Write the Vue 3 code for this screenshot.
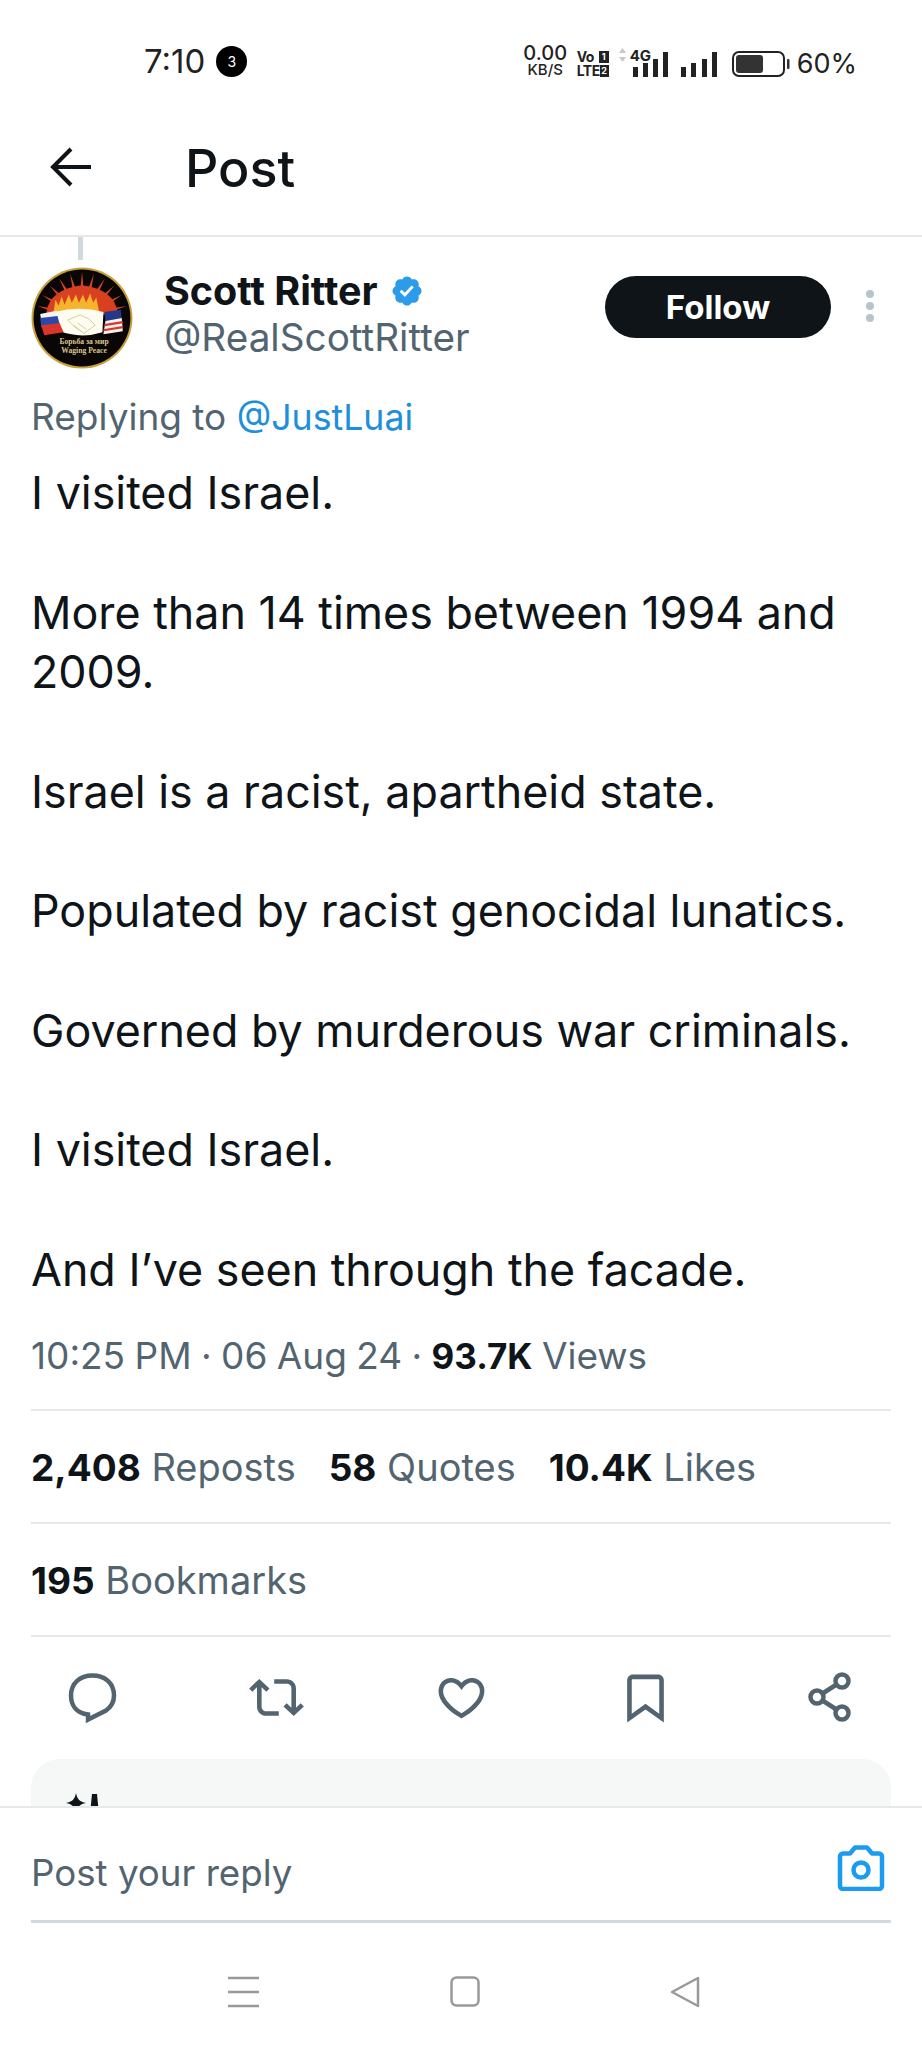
<script setup>
const lines = [
  'I visited Israel.',
  'More than 14 times between 1994 and 2009.',
  'Israel is a racist, apartheid state.',
  'Populated by racist genocidal lunatics.',
  'Governed by murderous war criminals.',
  'I visited Israel.',
  'And I’ve seen through the facade.'
]
const signalA = [[0, 10], [10, 14], [20, 18], [30, 25]]
const signalB = [[0, 10], [10, 14], [21, 18], [31, 25]]
const rays = Array.from({ length: 11 }, (_, i) => -75 + i * 15)
</script>

<template>
  <div class="screen">
    <div class="status">
      <div class="status-left">
        <span class="clock">7:10</span>
        <span class="count">3</span>
      </div>
      <div class="status-right">
        <div class="speed"><span class="speed-num">0.00</span><span class="speed-unit">KB/S</span></div>
        <div class="volte">
          <span class="volte-line">Vo<i class="sim">1</i></span>
          <span class="volte-line">LTE<i class="sim">2</i></span>
        </div>
        <div class="net">
          <svg class="updown" width="9" height="14" viewBox="0 0 9 14"><path d="M4.5 0 8 5H1zM4.5 14 8 9H1z" fill="#c8c8c8"/></svg>
          <span class="four-g">4G</span>
          <svg class="bars" width="35" height="26" viewBox="0 0 35 26">
            <rect v-for="b in signalA" :key="b[0]" :x="b[0]" :y="26 - b[1]" width="5" :height="b[1]" fill="#222" />
          </svg>
        </div>
        <svg class="bars" width="36" height="26" viewBox="0 0 36 26">
          <rect v-for="b in signalB" :key="b[0]" :x="b[0]" :y="26 - b[1]" width="5" :height="b[1]" fill="#222" />
        </svg>
        <svg class="battery" width="58" height="26" viewBox="0 0 58 26">
          <rect x="1" y="1" width="51" height="24" rx="6" fill="none" stroke="#222" stroke-width="2" />
          <rect x="4" y="4" width="27" height="18" rx="3" fill="#333" />
          <rect x="55" y="8" width="2.5" height="10" rx="1" fill="#333" />
        </svg>
        <span class="percent">60%</span>
      </div>
    </div>

    <header class="appbar">
      <svg class="back" width="42" height="40" viewBox="0 0 42 40">
        <path d="M41 20H3M21 2 3 20l18 18" fill="none" stroke="#0f1419" stroke-width="4" />
      </svg>
      <h1 class="title">Post</h1>
    </header>

    <main class="content">
      <div class="thread"></div>
      <div class="author">
        <svg class="avatar" viewBox="0 0 100 100">
          <circle cx="50" cy="50" r="49.5" fill="#c9a13a" />
          <circle cx="50" cy="50" r="47.5" fill="#0a0606" />
          <g fill="#d2452a">
            <polygon v-for="r in rays" :key="r" points="47,36 50,5 53,36" :transform="`rotate(${r} 50 50)`" />
          </g>
          <path d="M15 45Q18 22 50 18 82 22 85 45z" fill="#d8401f" />
          <path d="M22 45l2-13 3 6 3-9 3 8 4-10 3 8 4-8 3 8 4-8 3 8 4-9 3 9 3-5 3 15z" fill="#f6b42e" />
          <path d="M23 44Q48 38 71 44L70 64Q48 71 26 62z" fill="#fffdf2" />
          <path d="M9 46l16-3 2 6-17 3z" fill="#f4f4f4" />
          <path d="M9 50l17-2 2 8-18 3z" fill="#2b4aa8" />
          <path d="M10 57l18-2 4 9-19 3z" fill="#d8352b" />
          <path d="M72 44l16-2 1 8-16 3z" fill="#23388a" />
          <path d="M73 53l16-3 1 13-19 3z" fill="#f4f0ec" />
          <path d="M72 57l18-3M71 62l19-3" stroke="#d8352b" stroke-width="2.2" fill="none" />
          <path d="M36 52l12-5 9 4 6 6-11 8-9-6zM46 55l8 6M42 57l7 6" fill="none" stroke="#d9c88b" stroke-width="0.9" />
          <text x="52" y="75" text-anchor="middle" class="avatar-text">Борьба за мир</text>
          <text x="52" y="84" text-anchor="middle" class="avatar-text">Waging Peace</text>
        </svg>
        <div class="names">
          <div class="name-row">
            <span class="name">Scott Ritter</span>
            <svg class="verified" width="34" height="34" viewBox="0 0 22 22">
              <path fill="#2b9bea" d="M20.396 11c-.018-.646-.215-1.275-.57-1.816-.354-.54-.852-.972-1.438-1.246.223-.607.27-1.264.14-1.897-.131-.634-.437-1.218-.882-1.687-.47-.445-1.053-.75-1.687-.882-.633-.13-1.29-.083-1.897.14-.273-.587-.704-1.086-1.245-1.44S11.647 1.62 11 1.604c-.646.017-1.273.213-1.813.568s-.969.854-1.24 1.44c-.608-.223-1.267-.272-1.902-.14-.635.13-1.22.436-1.69.882-.445.47-.749 1.055-.878 1.688-.13.633-.08 1.29.144 1.896-.587.274-1.087.705-1.443 1.245-.356.54-.555 1.17-.574 1.817.02.647.218 1.276.574 1.817.356.54.856.972 1.443 1.245-.224.606-.274 1.263-.144 1.896.13.634.433 1.218.877 1.688.47.443 1.054.747 1.687.878.633.132 1.29.084 1.897-.136.274.586.705 1.084 1.246 1.439.54.354 1.17.551 1.816.569.647-.016 1.276-.213 1.817-.567s.972-.854 1.245-1.44c.604.239 1.266.296 1.903.164.636-.132 1.22-.447 1.68-.907.46-.46.776-1.044.908-1.681s.075-1.299-.165-1.903c.586-.274 1.084-.705 1.439-1.246.354-.54.551-1.17.569-1.816z"/>
              <path fill="#fff" d="M9.662 14.85l-3.429-3.428 1.293-1.302 2.072 2.072 4.4-4.794 1.347 1.246z"/>
            </svg>
          </div>
          <div class="handle">@RealScottRitter</div>
        </div>
        <button class="follow">Follow</button>
        <div class="more"><i></i><i></i><i></i></div>
      </div>

      <p class="replying">Replying to <a class="link">@JustLuai</a></p>

      <div class="body">
        <p v-for="(line, i) in lines" :key="i">{{ line }}</p>
      </div>

      <p class="meta">10:25 PM · 06 Aug 24 · <b>93.7K</b> Views</p>

      <div class="stat-row">
        <span><b>2,408</b> Reposts</span>
        <span><b>58</b> Quotes</span>
        <span><b>10.4K</b> Likes</span>
      </div>
      <div class="stat-row">
        <span><b>195</b> Bookmarks</span>
      </div>

      <div class="actions">
        <svg viewBox="0 0 55 55" class="stroked"><path d="M23 44.5C11 43 6 35 6 25.5 6 13 15 5.5 27.5 5.5 40 5.5 49 13 49 25.5c0 6.5-3 11.5-8 15L23 49.5z"/></svg>
        <svg viewBox="0 0 24 24"><path d="M4.5 3.88l4.432 4.14-1.364 1.46L5.5 7.55V16c0 1.1.896 2 2 2H13v2H7.5c-2.209 0-4-1.79-4-4V7.55L1.432 9.48.068 8.02 4.5 3.88zM16.5 6H11V4h5.5c2.209 0 4 1.79 4 4v8.45l2.068-1.93 1.364 1.46-4.432 4.14-4.432-4.14 1.364-1.46 2.068 1.93V8c0-1.1-.896-2-2-2z"/></svg>
        <svg viewBox="0 0 24 24"><path d="M16.697 5.5c-1.222-.06-2.679.51-3.89 2.16l-.805 1.09-.806-1.09C9.984 6.01 8.526 5.44 7.304 5.5c-1.243.07-2.349.78-2.91 1.91-.552 1.12-.633 2.78.479 4.82 1.074 1.97 3.257 4.27 7.129 6.61 3.87-2.34 6.052-4.64 7.126-6.61 1.111-2.04 1.03-3.7.477-4.82-.561-1.13-1.666-1.84-2.908-1.91zm4.187 7.69c-1.351 2.48-4.001 5.12-8.379 7.67l-.503.3-.504-.3c-4.379-2.55-7.029-5.19-8.382-7.67-1.36-2.5-1.41-4.86-.514-6.67.887-1.79 2.647-2.91 4.601-3.01 1.651-.09 3.368.56 4.798 2.01 1.429-1.45 3.146-2.1 4.796-2.01 1.954.1 3.714 1.22 4.601 3.01.896 1.81.846 4.17-.514 6.67z"/></svg>
        <svg viewBox="0 0 24 24"><path d="M4 4.5C4 3.12 5.119 2 6.5 2h11C18.881 2 20 3.12 20 4.5v18.44l-8-5.71-8 5.71V4.5zM6.5 4c-.276 0-.5.22-.5.5v14.56l6-4.29 6 4.29V4.5c0-.28-.224-.5-.5-.5h-11z"/></svg>
        <svg viewBox="0 0 55 55" class="stroked"><circle cx="14" cy="27" r="6.5"/><circle cx="39" cy="11" r="6.5"/><circle cx="39" cy="43" r="6.5"/><path d="M19.5 23.5 33.5 14.5M19.5 30.5 33.5 39.5"/></svg>
      </div>

      <div class="card">
        <svg class="spark" width="36" height="30" viewBox="0 0 36 30">
          <path d="M10 0c1 6 4 9 10 10-6 1-9 4-10 10-1-6-4-9-10-10 6-1 9-4 10-10z" fill="#0f1419"/>
          <path d="M26 1h5l2 20h-9z" fill="#0f1419"/>
        </svg>
      </div>
    </main>

    <div class="composer">
      <div class="composer-row">
        <span class="placeholder">Post your reply</span>
        <svg class="camera" width="48" height="46" viewBox="0 0 48 46">
          <path d="M3 11.5a3 3 0 0 1 3-3h7l5-6h12l5 6h7a3 3 0 0 1 3 3V41a3 3 0 0 1-3 3H6a3 3 0 0 1-3-3z" fill="none" stroke="#1d9bf0" stroke-width="4.5" stroke-linejoin="round"/>
          <circle cx="24" cy="25" r="7.5" fill="none" stroke="#1d9bf0" stroke-width="4.5"/>
        </svg>
      </div>
    </div>

    <nav class="navbar">
      <svg width="32" height="32" viewBox="0 0 32 32"><path d="M0 2h31M0 16h31M0 30h31" stroke="#999" stroke-width="2.5" fill="none"/></svg>
      <svg width="30" height="32" viewBox="0 0 30 32"><rect x="1.5" y="1.5" width="27" height="28" rx="5" fill="none" stroke="#999" stroke-width="2.5"/></svg>
      <svg width="30" height="32" viewBox="0 0 30 32"><path d="M28 2v28L2 16z" fill="none" stroke="#999" stroke-width="2.5" stroke-linejoin="round"/></svg>
    </nav>
  </div>
</template>

<style scoped>
.screen {
  width: 922px;
  height: 2048px;
  display: flex;
  flex-direction: column;
  background: #fff;
  color: #0f1419;
  font-family: Inter, "Liberation Sans", sans-serif;
  overflow: hidden;
}
.status {
  height: 102px;
  flex: none;
  box-sizing: border-box;
  padding: 20px 65px 0 144px;
  display: flex;
  align-items: center;
  justify-content: space-between;
}
.status-left { display: flex; align-items: center; gap: 11px; }
.clock { font-size: 33px; color: #222; }
.count {
  width: 31px; height: 31px; border-radius: 50%;
  background: #000; color: #fff;
  display: flex; align-items: center; justify-content: center;
  font-size: 14px;
}
.status-right { display: flex; align-items: flex-end; color: #222; }
.speed { display: flex; flex-direction: column; align-items: center; width: 45px; font-weight: 500; }
.speed-num { font-size: 20px; line-height: 17px; }
.speed-unit { font-size: 15px; line-height: 15px; }
.volte {
  display: flex; flex-direction: column; gap: 1px; margin-left: 9px; width: 32px;
  font-size: 14px; line-height: 13px; font-weight: 700; white-space: nowrap;
}
.volte-line { display: flex; justify-content: space-between; align-items: center; letter-spacing: -0.5px; }
.sim {
  width: 10px; height: 12px; background: #222; color: #fff;
  font-size: 9px; line-height: 12px; font-style: normal; text-align: center; letter-spacing: 0;
}
.net { position: relative; margin-left: 24px; }
.updown { position: absolute; left: -15px; top: -3px; }
.four-g { position: absolute; left: -3px; top: -3px; font-size: 15px; line-height: 15px; font-weight: 700; background: #fff; }
.bars { display: block; }
.net + .bars { margin-left: 13px; }
.battery { margin-left: 15px; display: block; }
.percent { margin-left: 7px; font-size: 27px; line-height: 26px; }
.appbar {
  height: 135px;
  flex: none;
  box-sizing: border-box;
  padding: 0 0 4px 50px;
  display: flex;
  align-items: center;
  border-bottom: 2px solid #e6e9eb;
}
.back { display: block; }
.title { margin: 4px 0 0 93px; font-size: 52px; font-weight: 500; }
.content { flex: 1; min-height: 0; overflow: hidden; padding: 0 31px; }
.thread { width: 5px; height: 23px; margin-left: 47px; background: #cfd9de; }
.author { display: flex; align-items: flex-start; margin-top: 7px; position: relative; }
.avatar { width: 102px; height: 102px; flex: none; display: block; }
.avatar-text { font-size: 7.5px; fill: #d8c58a; font-family: "Liberation Serif", serif; font-weight: 700; }
.names { margin-left: 31px; flex: 1; }
.name-row { display: flex; align-items: center; gap: 12px; height: 44px; margin-top: 2px; }
.name { font-size: 39.5px; font-weight: 700; }
.handle { font-size: 38.7px; line-height: 44px; color: #536471; margin-top: 2px; }
.follow {
  width: 226px; height: 62px; margin-top: 9px; margin-right: 60px;
  border: 0; border-radius: 31px; background: #0f1419; color: #fff;
  font: 700 33px Inter, "Liberation Sans", sans-serif;
}
.more { position: absolute; right: 17px; top: 23px; display: flex; flex-direction: column; gap: 4px; }
.more i { width: 8px; height: 8px; border-radius: 50%; background: #b6c4cc; display: block; }
p { margin: 0; }
.replying { margin-top: 25px; font-size: 37px; line-height: 46px; color: #536471; }
.link { color: #1d8fdc; font-size: 35.7px; }
.body { margin-top: 24px; font-size: 44.8px; line-height: 59.75px; }
.body p + p { margin-top: 59.75px; }
.meta { margin-top: 30px; font-size: 37px; line-height: 50px; color: #536471; word-spacing: -1px; }
.meta b { font-size: 35px; }
b { color: #0f1419; font-weight: 700; font-size: 37px; }
.stat-row {
  display: flex; gap: 33px;
  font-size: 38px; line-height: 50px; color: #536471;
  padding: 31px 0;
  border-top: 2px solid #e6e9eb;
  height: 113px; box-sizing: border-box;
}
.meta + .stat-row { margin-top: 28px; }
.actions {
  height: 124px;
  border-top: 2px solid #e6e9eb;
  box-sizing: border-box;
  padding: 0 33.5px;
  display: flex; align-items: center; justify-content: space-between;
}
.actions svg { width: 55px; height: 55px; fill: #536471; display: block; }
.actions .stroked { fill: none; stroke: #536471; stroke-width: 4.5; }
.card {
  height: 120px; border-radius: 28px 28px 0 0; background: #f6f8f8;
  padding: 34px 35px 0; box-sizing: border-box;
}
.spark { display: block; }
.composer {
  flex: none;
  height: 117px;
  box-sizing: border-box;
  border-top: 2px solid #e6e9eb;
  padding: 0 31px;
  background: #fff;
}
.composer-row {
  height: 115px; box-sizing: border-box; padding-right: 6px;
  border-bottom: 3px solid #cfd9de;
  display: flex; align-items: center; justify-content: space-between;
}
.placeholder { font-size: 36.7px; color: #536471; margin-top: 16px; }
.camera { margin-top: 8px; }
.navbar {
  flex: none;
  height: 125px;
  box-sizing: border-box;
  padding: 12px 0 0 6px;
  display: flex; align-items: center; justify-content: center; gap: 190px;
}
.navbar svg { display: block; }
</style>
